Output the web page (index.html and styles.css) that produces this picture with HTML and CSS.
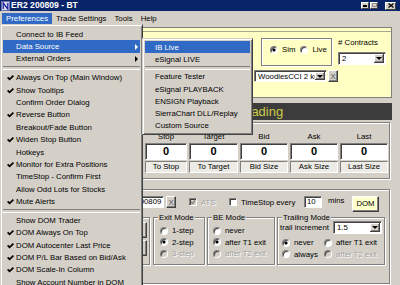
FILE: index.html
```html
<!DOCTYPE html>
<html>
<head>
    <title>ER2 200809 - BT</title>
    <link rel="stylesheet" href="styles.css">
</head>
<body>
    <div class="window">
        <div class="titlebar">
            <svg class="app-icon" width="9" height="10" viewBox="0 0 9 10">
                <rect x="0.5" y="0.5" width="8" height="9" fill="#dcdcf0" stroke="#7070b0"/>
                <path d="M2.2 8 V2 L6.8 8 V2" fill="none" stroke="#1c2a9c" stroke-width="1.3"/>
            </svg>
            <span class="title">ER2 200809 - BT</span>
            <div class="caption">
                <span class="cbtn min"><svg width="4" height="2"><rect width="4" height="2" fill="#000"/></svg></span>
                <span class="cbtn"><svg width="5" height="4"><rect x="0.5" y="0.5" width="4" height="3" fill="none" stroke="#909090"/></svg></span>
                <span class="cbtn close"><svg width="6" height="5" viewBox="0 0 6 5"><path d="M0.5 0.5 L5.5 4.5 M5.5 0.5 L0.5 4.5" stroke="#000" stroke-width="1.3"/></svg></span>
            </div>
        </div>

        <div class="menubar">
            <span class="open">Preferences</span>
            <span>Trade Settings</span>
            <span>Tools</span>
            <span>Help</span>
        </div>

        <div class="client">
            <!-- account / strategy setup -->
            <div class="setup">
                <div class="setup-rule"></div>
                <div class="setup-row">
                    <div class="account"></div>
                    <div class="mode-box">
                        <label class="radio on"><i></i>Sim</label>
                        <label class="radio"><i></i>Live</label>
                    </div>
                    <div class="contracts">
                        <div class="cap"># Contracts</div>
                        <div class="select"><span class="val">2</span><span class="drop"></span></div>
                    </div>
                </div>
                <div class="strategy-row">
                    <span class="spacer"></span>
                    <div class="select strat"><span class="val">WoodiesCCI 2 kc</span><span class="drop"></span></div>
                    <span class="xbtn">X</span>
                </div>
            </div>

            <div class="status">Not Trading</div>

            <!-- quotes -->
            <div class="quotes">
                <div class="qcol stop"><div class="qh">Stop</div><div class="qv">0</div><div class="ql">To Stop</div></div>
                <div class="qcol target"><div class="qh">Target</div><div class="qv">0</div><div class="ql">To Target</div></div>
                <div class="qcol"><div class="qh">Bid</div><div class="qv">0</div><div class="ql">Bid Size</div></div>
                <div class="qcol"><div class="qh">Ask</div><div class="qv">0</div><div class="ql">Ask Size</div></div>
                <div class="qcol"><div class="qh">Last</div><div class="qv">0</div><div class="ql">Last Size</div></div>
            </div>

            <!-- order options -->
            <div class="orders">
                <div class="order-row">
                    <span class="sym-lbl"></span>
                    <span class="field sym">ER2 200809</span>
                    <span class="xbtn">X</span>
                    <label class="check off ats"><i><svg viewBox="0 0 7 7"><path d="M1 3.4 L2.8 5.2 L6 1.8"/></svg></i>ATS</label>
                    <label class="check ts"><i></i>TimeStop every</label>
                    <span class="field mins-val">10</span>
                    <span class="mins">mins</span>
                    <span class="dom">DOM</span>
                </div>
                <div class="groups">
                    <div class="grp ord">
                        <div class="ord-btns"><span class="btn"></span><span class="btn"></span></div>
                    </div>
                    <div class="grp exit">
                        <span class="grp-title">Exit Mode</span>
                        <div class="opts">
                            <label class="radio"><i></i>1-step</label>
                            <label class="radio on"><i></i>2-step</label>
                            <label class="radio off"><i></i>3-step</label>
                        </div>
                    </div>
                    <div class="grp be">
                        <span class="grp-title">BE Mode</span>
                        <div class="opts">
                            <label class="radio"><i></i>never</label>
                            <label class="radio on"><i></i>after T1 exit</label>
                            <label class="radio off"><i></i>after T2 exit</label>
                        </div>
                    </div>
                    <div class="grp trail">
                        <span class="grp-title">Trailing Mode</span>
                        <div class="trail-inc">
                            <span>trail increment</span>
                            <div class="select inc"><span class="val">1.5</span><span class="drop"></span></div>
                        </div>
                        <div class="trail-opts">
                            <label class="radio on"><i></i>never</label>
                            <label class="radio"><i></i>after T1 exit</label>
                            <label class="radio"><i></i>always</label>
                            <label class="radio off"><i></i>after T2 exit</label>
                        </div>
                    </div>
                </div>
            </div>
        </div>

        <!-- open Preferences menu -->
        <div class="menu main-menu">
            <div class="mi">Connect to IB Feed</div>
            <div class="mi hl">Data Source<span class="arrow"></span></div>
            <div class="mi">External Orders<span class="arrow"></span></div>
            <div class="sep"></div>
            <div class="mi on"><svg class="ck" viewBox="0 0 7 7"><path d="M0.6 3.4 L2.6 5.4 L6.4 1.6"/></svg>Always On Top (Main Window)</div>
            <div class="mi on"><svg class="ck" viewBox="0 0 7 7"><path d="M0.6 3.4 L2.6 5.4 L6.4 1.6"/></svg>Show Tooltips</div>
            <div class="mi">Confirm Order Dialog</div>
            <div class="mi on"><svg class="ck" viewBox="0 0 7 7"><path d="M0.6 3.4 L2.6 5.4 L6.4 1.6"/></svg>Reverse Button</div>
            <div class="mi">Breakout/Fade Button</div>
            <div class="mi on"><svg class="ck" viewBox="0 0 7 7"><path d="M0.6 3.4 L2.6 5.4 L6.4 1.6"/></svg>Widen Stop Button</div>
            <div class="mi">Hotkeys</div>
            <div class="mi on"><svg class="ck" viewBox="0 0 7 7"><path d="M0.6 3.4 L2.6 5.4 L6.4 1.6"/></svg>Monitor for Extra Positions</div>
            <div class="mi">TimeStop - Confirm First</div>
            <div class="mi">Allow Odd Lots for Stocks</div>
            <div class="mi on"><svg class="ck" viewBox="0 0 7 7"><path d="M0.6 3.4 L2.6 5.4 L6.4 1.6"/></svg>Mute Alerts</div>
            <div class="sep"></div>
            <div class="mi">Show DOM Trader</div>
            <div class="mi on"><svg class="ck" viewBox="0 0 7 7"><path d="M0.6 3.4 L2.6 5.4 L6.4 1.6"/></svg>DOM Always On Top</div>
            <div class="mi on"><svg class="ck" viewBox="0 0 7 7"><path d="M0.6 3.4 L2.6 5.4 L6.4 1.6"/></svg>DOM Autocenter Last Price</div>
            <div class="mi on"><svg class="ck" viewBox="0 0 7 7"><path d="M0.6 3.4 L2.6 5.4 L6.4 1.6"/></svg>DOM P/L Bar Based on Bid/Ask</div>
            <div class="mi on"><svg class="ck" viewBox="0 0 7 7"><path d="M0.6 3.4 L2.6 5.4 L6.4 1.6"/></svg>DOM Scale-In Column</div>
            <div class="mi">Show Account Number in DOM</div>
        </div>

        <div class="menu sub-menu">
            <div class="mi hl">IB Live</div>
            <div class="mi">eSignal LIVE</div>
            <div class="sep"></div>
            <div class="mi">Feature Tester</div>
            <div class="mi">eSignal PLAYBACK</div>
            <div class="mi">ENSIGN Playback</div>
            <div class="mi">SierraChart DLL/Replay</div>
            <div class="mi">Custom Source</div>
        </div>
    </div>
</body>
</html>
```

FILE: styles.css
```css
* { box-sizing: border-box; }
body { margin: 0; background: #d4d0c8; font-family: "Liberation Sans", Arial, sans-serif; font-size: 7.8px; color: #000; }
.window { position: relative; width: 400px; height: 285px; overflow: hidden; background: #d4d0c8; }

/* title + menu bar */
.titlebar { display: flex; align-items: center; height: 11px; padding-left: 1px; background: #0a246a; color: #fff; }
.app-icon { display: block; margin-right: 1px; }
.title { font-size: 8.6px; font-weight: bold; line-height: 11px; }
.caption { display: flex; gap: 1px; margin-left: auto; margin-right: 4px; }
.cbtn { display: flex; align-items: center; justify-content: center; width: 8px; height: 7px; background: #d4d0c8; border: 1px solid; border-color: #fff #404040 #404040 #fff; }
.cbtn.min { align-items: flex-end; padding-bottom: 1px; }
.cbtn svg { display: block; }
.cbtn.close { width: 11px; height: 8px; margin-left: 6px; }
.menubar { display: flex; align-items: flex-end; height: 13px; padding-left: 2px; }
.menubar span { padding: 0 4px; line-height: 11px; }
.menubar .open { background: #316ac5; color: #fff; }

/* common controls */
.select { display: flex; align-items: center; padding: 1px 1px 1px 3px; background: #fff; border: 1px solid; border-color: #808080 #fff #fff #808080; box-shadow: inset 1px 1px #404040; }
.select .val { flex: 1; overflow: hidden; white-space: nowrap; }
.drop { display: flex; align-items: center; justify-content: center; width: 10px; align-self: stretch; background: #d4d0c8; box-shadow: inset -1px -1px #404040, inset 1px 1px #fff, inset -2px -2px #808080; }
.drop::before { content: ""; border-top: 3px solid #000; border-left: 3px solid transparent; border-right: 3px solid transparent; }
.xbtn { display: flex; align-items: center; justify-content: center; width: 10px; height: 12px; background: #d4d0c8; border: 1px solid; border-color: #fff #404040 #404040 #fff; box-shadow: inset -1px -1px #808080; color: #505060; }
.field { height: 12px; padding: 0 2px; background: #fff; border: 1px solid; border-color: #808080 #fff #fff #808080; box-shadow: inset 1px 1px #404040; line-height: 10px; white-space: nowrap; overflow: hidden; }
.radio { display: flex; align-items: center; height: 11.6px; white-space: nowrap; }
.radio i { flex: none; width: 8px; height: 8px; margin-right: 4px; border-radius: 50%; background: #fff; border: 1px solid; border-color: #808080 #fff #fff #808080; box-shadow: inset 1px 1px #404040; }
.radio.on i { background: radial-gradient(circle, #000 0, #000 1.3px, #fff 1.8px); }
.radio.off { color: #a4a4a4; text-shadow: 1px 1px #fff; }
.radio.off i { background: #d4d0c8; }
.check { display: flex; align-items: center; height: 12px; white-space: nowrap; }
.check i { flex: none; display: flex; width: 8px; height: 8px; margin-right: 4px; background: #fff; border: 1px solid; border-color: #808080 #fff #fff #808080; box-shadow: inset 1px 1px #404040; }
.check i svg { width: 6px; height: 6px; }
.check i path { fill: none; stroke: #808080; stroke-width: 1.5; }
.check.off { color: #a4a4a4; text-shadow: 1px 1px #fff; }
.check.off i { background: #d4d0c8; }

/* client area */
.client { padding: 3px 8px 0 4px; }
.setup { height: 71px; background: #ffffc4; border: 1px solid #808080; }
.setup-rule { height: 4px; border-bottom: 1px solid #a8a890; }
.setup-row { display: flex; padding: 6px 5px 0 0; }
.account { flex: 1; }
.mode-box { display: flex; gap: 5px; width: 71px; height: 28px; padding: 5px 0 0 8px; border: 1px solid #808080; box-shadow: inset 1px 1px #fff, 1px 1px #fff; }
.contracts { width: 48px; margin-left: 6px; }
.contracts .cap { line-height: 10px; white-space: nowrap; }
.contracts .select { height: 13px; margin-top: 4px; }
.strategy-row { display: flex; align-items: center; margin-top: 4px; padding-right: 53px; }
.strategy-row .spacer { flex: 1; }
.strat { width: 73px; height: 12px; }
.strategy-row .xbtn { margin-left: 1px; }

.status { height: 17px; margin-top: 5px; padding-left: 212px; background: #3c3c3c; color: #cccc48; font-size: 13px; line-height: 17px; }

.quotes { display: flex; justify-content: flex-end; gap: 2px; height: 57px; margin: 2px 2px 0 0; padding: 8px 1px 0 0; border: 1px solid #808080; box-shadow: inset 1px 1px #fff, 1px 1px #fff; }
.qcol { width: 48px; text-align: center; white-space: nowrap; }
.qcol.stop { width: 42px; }
.qcol.target { width: 49px; }
.qh { height: 12px; line-height: 12px; }
.qv { height: 17px; background: #fff; border: 1px solid; border-color: #808080 #fff #fff #808080; box-shadow: inset 1px 1px #404040; font-size: 11px; font-weight: bold; line-height: 15px; }
.ql { height: 12px; margin-top: 1px; background: #ecebe6; border: 1px solid; border-color: #808080 #fff #fff #808080; line-height: 10px; }

.orders { height: 95px; margin: 10px 2px 0 0; padding: 6px 4px 0 0; border: 1px solid #808080; box-shadow: inset 1px 1px #fff, 1px 1px #fff; }
.order-row { display: flex; align-items: flex-start; height: 16px; }
.sym-lbl { width: 110px; }
.sym { width: 49px; }
.order-row .xbtn { margin-left: 2px; }
.ats { width: 36px; margin-left: 13px; }
.ts { width: 75px; margin-left: 4px; }
.mins-val { width: 18px; }
.mins { width: 24px; margin-left: 6px; line-height: 10px; }
.dom { width: 27px; height: 16px; background: #ffffcc; border: 1px solid; border-color: #fff #404040 #404040 #fff; box-shadow: inset -1px -1px #808080; text-align: center; line-height: 14px; }

.groups { display: flex; margin-top: 5px; }
.grp { display: flex; flex-direction: column; height: 48px; border: 1px solid #808080; box-shadow: inset 1px 1px #fff, 1px 1px #fff; }
.grp-title { align-self: flex-start; margin: -5px 0 0 4px; padding: 0 1px; background: #d4d0c8; line-height: 9px; white-space: nowrap; }
.grp.ord { width: 145px; }
.grp.exit { width: 52px; margin-left: 3px; }
.grp.be { width: 68px; margin-left: 2px; }
.grp.trail { width: 108px; margin-left: 2px; }
.opts { padding: 3px 0 0 6px; }
.be .opts { padding-left: 5px; }
.ord-btns { display: flex; flex-direction: column; align-items: flex-end; gap: 2px; padding: 4px 2px 0 0; }
.btn { width: 60px; height: 16px; background: #d4d0c8; border: 1px solid; border-color: #fff #404040 #404040 #fff; box-shadow: inset -1px -1px #808080; }
.trail-inc { display: flex; align-items: center; margin-top: -1px; padding: 0 2px; white-space: nowrap; }
.inc { width: 49px; height: 13px; margin-left: auto; }
.trail-opts { display: grid; grid-template-columns: 42px 1fr; padding: 3px 0 0 4px; }

/* drop-down menus */
.menu { position: absolute; padding: 2px; background: #d4d0c8; border: 1px solid; border-color: #d4d0c8 #404040 #404040 #d4d0c8; box-shadow: inset 1px 1px #fff, inset -1px -1px #808080; }
.main-menu { left: 0; top: 24px; width: 143px; height: 270px; padding-top: 3px; }
.sub-menu { left: 142px; top: 38px; width: 111px; }
.mi { display: flex; align-items: center; height: 12.4px; padding-left: 13px; white-space: nowrap; }
.mi.on { padding-left: 4px; }
.sub-menu .mi { height: 12.2px; padding-left: 10px; }
.mi.hl { background: #316ac5; color: #fff; }
.ck { flex: none; width: 7px; height: 7px; margin-right: 2px; }
.ck path { fill: none; stroke: #000; stroke-width: 1.7; }
.arrow { margin-left: auto; margin-right: 2px; border-left: 3px solid currentColor; border-top: 3px solid transparent; border-bottom: 3px solid transparent; }
.sep { display: flex; align-items: center; height: 6.3px; }
.sep::before { content: ""; flex: 1; height: 2px; border-top: 1px solid #808080; border-bottom: 1px solid #fff; }
.sub-menu .sep { height: 5.5px; }
```
